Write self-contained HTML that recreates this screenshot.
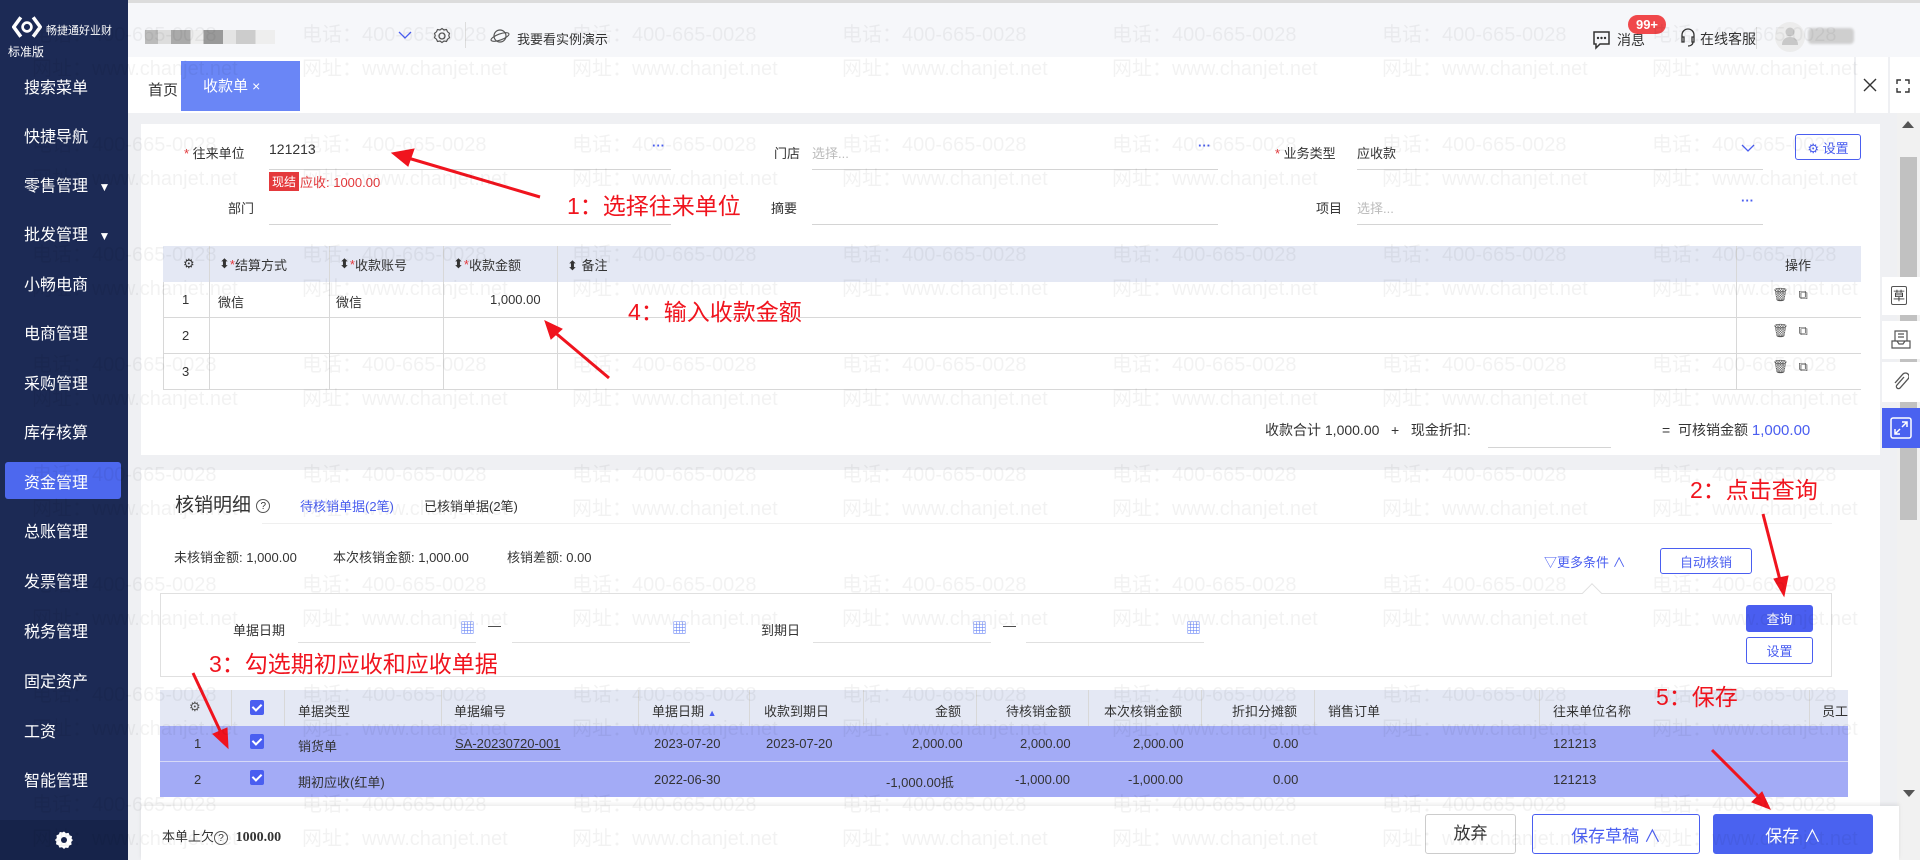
<!DOCTYPE html>
<html><head><meta charset="utf-8"><style>
*{box-sizing:border-box;margin:0;padding:0}
body{width:1920px;height:860px;overflow:hidden;position:relative;background:#eff0f3;font-family:"Liberation Sans","Noto Sans CJK SC",sans-serif;font-size:13px;color:#333}
.a{position:absolute;white-space:nowrap}
.sb{left:0;top:0;width:128px;height:860px;background:#1c2a55}
.mi{position:absolute;left:24px;color:#fff;font-size:16px;transform:translateY(-50%)}
.ul{position:absolute;height:1px;background:#d4d4d4}
.red{color:#e4393c}
.ann{position:absolute;color:#f0141e;font-size:23px;white-space:nowrap;transform:translateY(-50%)}
.th{position:absolute;top:0;height:100%;display:flex;align-items:center;font-size:13px;color:#333}
.vl{position:absolute;width:1px;background:#d8d8d8}
.hl{position:absolute;height:1px;background:#d8d8d8}
.cb{position:absolute;width:14px;height:15px;background:#4a5ef0;border-radius:2px}
.cb:after{content:"";position:absolute;left:4px;top:2px;width:4px;height:7px;border:solid #fff;border-width:0 2px 2px 0;transform:rotate(45deg)}
.wm{position:absolute;color:rgba(0,0,0,0.05);font-size:20px;font-family:"Liberation Sans Narrow","Liberation Sans","Noto Sans CJK SC",sans-serif;white-space:nowrap;pointer-events:none;z-index:50}
.btn{position:absolute;border:1px solid #4a5ef0;border-radius:3px;color:#4a5ef0;display:flex;align-items:center;justify-content:center;background:#fff}
</style></head><body>

<!-- header -->
<div class="a" style="left:0;top:0;width:1920px;height:57px;background:#f6f7fa;border-top:3px solid #dcdcdc"></div>
<div class="a" style="left:145px;top:30px;width:130px;height:14px;background:linear-gradient(90deg,#bbb 0 10%,#ddd 10% 20%,#aaa 20% 35%,#eee 35% 45%,#999 45% 60%,#e4e4e4 60% 70%,#ccc 70% 85%,#eee 85%)"></div>
<svg class="a" style="left:398px;top:30px" width="14" height="10"><path d="M1 2l6 6 6-6" stroke="#4a5ef0" fill="none" stroke-width="1.3"/></svg>
<svg class="a" style="left:433px;top:27px" width="18" height="18" viewBox="0 0 18 18"><circle cx="9" cy="9" r="3" stroke="#555" fill="none" stroke-width="1.3"/><path d="M9 1.5l2 1.5 2.5-.5 1 2.3 2 1.5-.7 2.2.7 2.2-2 1.5-1 2.3-2.5-.5-2 1.5-2-1.5-2.5.5-1-2.3-2-1.5.7-2.2-.7-2.2 2-1.5 1-2.3 2.5.5z" stroke="#555" fill="none" stroke-width="1.2"/></svg>
<div class="a" style="left:465px;top:22px;width:1px;height:26px;background:#ddd"></div>
<svg class="a" style="left:490px;top:27px" width="20" height="18"><ellipse cx="10" cy="9" rx="6" ry="6" stroke="#555" fill="none" stroke-width="1.2"/><ellipse cx="10" cy="10" rx="9.5" ry="3" stroke="#555" fill="none" stroke-width="1.1" transform="rotate(-20 10 10)"/></svg>
<div class="a" style="left:517px;top:29px;font-size:13px;color:#333">我要看实例演示</div>
<svg class="a" style="left:1592px;top:30px" width="20" height="20"><path d="M2 2h15v12H8l-4 4v-4H2z" stroke="#333" fill="none" stroke-width="1.5"/><circle cx="6" cy="8" r="1.2" fill="#333"/><circle cx="9.5" cy="8" r="1.2" fill="#333"/><circle cx="13" cy="8" r="1.2" fill="#333"/></svg>
<div class="a" style="left:1617px;top:30px;font-size:14px">消息</div>
<div class="a" style="left:1628px;top:15px;width:38px;height:19px;background:#f0484b;border-radius:10px;color:#fff;font-size:13px;font-weight:bold;text-align:center;line-height:19px">99+</div>
<svg class="a" style="left:1680px;top:27px" width="16" height="22"><path d="M2 12V8a6 6 0 0 1 12 0v4M2 10h2v5H2zM12 10h2v5h-2zM13 15c0 3-3 4-5 4" stroke="#333" fill="none" stroke-width="1.3"/></svg>
<div class="a" style="left:1700px;top:29px;font-size:14px">在线客服</div>
<div class="a" style="left:1756px;top:27px;width:1px;height:22px;background:#ddd"></div>
<div class="a" style="left:1775px;top:22px;width:30px;height:30px;border-radius:50%;background:#ececec"></div>
<svg class="a" style="left:1781px;top:26px" width="18" height="20"><circle cx="9" cy="6" r="4.5" fill="#c8c8c8"/><path d="M1 19c0-6 4-8 8-8s8 2 8 8z" fill="#c8c8c8"/></svg>
<div class="a" style="left:1808px;top:28px;width:46px;height:16px;background:#cfcfcf;border-radius:4px;filter:blur(1px)"></div>

<!-- sidebar -->
<div class="a sb"></div>
<svg class="a" style="left:12px;top:15px" width="30" height="24" viewBox="0 0 34 26"><path d="M10 2L2 13l8 11" stroke="#fff" stroke-width="4" fill="none"/><path d="M24 2l8 11-8 11" stroke="#fff" stroke-width="4" fill="none"/><circle cx="17" cy="13" r="5" stroke="#fff" stroke-width="3" fill="none"/></svg>
<div class="a" style="left:46px;top:22px;color:#fff;font-size:11px">畅捷通好业财</div>
<div class="a" style="left:8px;top:43px;color:#fff;font-size:12px">标准版</div>
<div class="mi" style="top:86px">搜索菜单</div>
<div class="mi" style="top:135px">快捷导航</div>
<div class="mi" style="top:184px">零售管理 <span style="font-size:12px;margin-left:6px">▼</span></div>
<div class="mi" style="top:233px">批发管理 <span style="font-size:12px;margin-left:6px">▼</span></div>
<div class="mi" style="top:283px">小畅电商</div>
<div class="mi" style="top:332px">电商管理</div>
<div class="mi" style="top:382px">采购管理</div>
<div class="mi" style="top:431px">库存核算</div>
<div class="a" style="left:5px;top:462px;width:116px;height:37px;background:#4d68ee;border-radius:3px"></div>
<div class="mi" style="top:481px">资金管理</div>
<div class="mi" style="top:530px">总账管理</div>
<div class="mi" style="top:580px">发票管理</div>
<div class="mi" style="top:630px">税务管理</div>
<div class="mi" style="top:680px">固定资产</div>
<div class="mi" style="top:730px">工资</div>
<div class="mi" style="top:779px">智能管理</div>
<div class="mi" style="top:828px">基础设置</div>
<div class="a" style="left:0;top:820px;width:128px;height:40px;background:#16234a"></div>
<svg class="a" style="left:55px;top:831px" width="18" height="18" viewBox="0 0 18 18"><path d="M9 0.5l2 1.8 2.6-.4 1 2.4 2.4 1-.4 2.6L18 9l-1.8 2 .4 2.6-2.4 1-1 2.4-2.6-.4L9 18l-2-1.8-2.6.4-1-2.4-2.4-1 .4-2.6L0 9l1.8-2-.4-2.6 2.4-1 1-2.4 2.6.4z" fill="#fff"/><circle cx="9" cy="9" r="3" fill="#16234a"/></svg>

<!-- tab row -->
<div class="a" style="left:128px;top:57px;width:1726px;height:56px;background:#fff"></div>
<div class="a" style="left:148px;top:79px;font-size:15px">首页</div>
<div class="a" style="left:181px;top:61px;width:119px;height:50px;background:#6a86f6;color:#fff;font-size:15px;line-height:50px;padding-left:22px">收款单 <span style="font-size:14px">×</span></div>
<div class="a" style="left:1856px;top:57px;width:32px;height:56px;background:#fff"></div>
<div class="a" style="left:1890px;top:57px;width:30px;height:56px;background:#fff"></div>
<svg class="a" style="left:1863px;top:78px" width="14" height="14"><path d="M1 1l12 12M13 1L1 13" stroke="#333" stroke-width="1.4"/></svg>
<svg class="a" style="left:1896px;top:79px" width="14" height="14"><path d="M1 5V1h4M9 1h4v4M13 9v4H9M5 13H1V9" stroke="#333" stroke-width="1.4" fill="none"/></svg>

<!-- scrollbar -->
<div class="a" style="left:1897px;top:113px;width:23px;height:747px;background:#f1f1f1"></div>
<div class="a" style="left:1900px;top:157px;width:17px;height:363px;background:#c1c1c1"></div>
<svg class="a" style="left:1902px;top:120px" width="12" height="8"><path d="M0 8L6 1 12 8z" fill="#555"/></svg>
<svg class="a" style="left:1903px;top:790px" width="12" height="8"><path d="M0 0h12L6 7z" fill="#555"/></svg>

<!-- card 1 -->
<div class="a" style="left:141px;top:124px;width:1739px;height:331px;background:#fff"></div>
<div class="a" style="left:184px;top:143px"><span class="red">*</span> 往来单位</div>
<div class="a" style="left:269px;top:141px;font-size:14px">121213</div>
<div class="ul" style="left:269px;top:169px;width:402px"></div>
<div class="a" style="left:652px;top:138px;color:#4a5ef0;font-weight:bold">···</div>
<div class="a" style="left:269px;top:172px;background:#e4393c;color:#fff;font-size:12px;padding:1px 3px">现结</div>
<div class="a red" style="left:300px;top:172px;font-size:13px">应收: 1000.00</div>
<div class="a" style="left:774px;top:143px">门店</div>
<div class="a" style="left:812px;top:143px;color:#bbb">选择...</div>
<div class="ul" style="left:812px;top:169px;width:406px"></div>
<div class="a" style="left:1198px;top:138px;color:#4a5ef0;font-weight:bold">···</div>
<div class="a" style="left:1275px;top:143px"><span class="red">*</span> 业务类型</div>
<div class="a" style="left:1357px;top:143px">应收款</div>
<svg class="a" style="left:1741px;top:144px" width="14" height="9"><path d="M1 1l6 6 6-6" stroke="#4a5ef0" fill="none" stroke-width="1.3"/></svg>
<div class="ul" style="left:1357px;top:169px;width:406px"></div>
<div class="btn" style="left:1795px;top:134px;width:66px;height:26px;font-size:13px">⚙ 设置</div>
<div class="a" style="left:228px;top:198px">部门</div>
<div class="ul" style="left:269px;top:224px;width:402px"></div>
<div class="a" style="left:771px;top:198px">摘要</div>
<div class="ul" style="left:812px;top:224px;width:406px"></div>
<div class="a" style="left:1316px;top:198px">项目</div>
<div class="a" style="left:1357px;top:198px;color:#bbb">选择...</div>
<div class="a" style="left:1741px;top:193px;color:#4a5ef0;font-weight:bold">···</div>
<div class="ul" style="left:1357px;top:224px;width:406px"></div>

<!-- table1 -->
<div class="a" style="left:163px;top:246px;width:1698px;height:36px;background:#e4e8f4">
 <div class="th" style="left:20px">⚙</div>
 <div class="th" style="left:56px">⬍<span class="red">*</span>结算方式</div>
 <div class="th" style="left:176px">⬍<span class="red">*</span>收款账号</div>
 <div class="th" style="left:290px">⬍ <span class="red">*</span>收款金额</div>
 <div class="th" style="left:404px">⬍ 备注</div>
 <div class="th" style="left:1622px">操作</div>
</div>
<div class="vl" style="left:209px;top:246px;height:143px"></div>
<div class="vl" style="left:329px;top:246px;height:143px"></div>
<div class="vl" style="left:443px;top:246px;height:143px"></div>
<div class="vl" style="left:557px;top:246px;height:143px"></div>
<div class="vl" style="left:1736px;top:246px;height:143px"></div>
<div class="vl" style="left:163px;top:282px;height:107px"></div>
<div class="hl" style="left:163px;top:317px;width:1698px"></div>
<div class="hl" style="left:163px;top:353px;width:1698px"></div>
<div class="hl" style="left:163px;top:389px;width:1698px"></div>
<div class="a" style="left:182px;top:292px">1</div>
<div class="a" style="left:182px;top:328px">2</div>
<div class="a" style="left:182px;top:364px">3</div>
<div class="a" style="left:218px;top:292px">微信</div>
<div class="a" style="left:336px;top:292px">微信</div>
<div class="a" style="left:490px;top:292px">1,000.00</div>
<div class="a" style="left:1772px;top:287px;font-size:13px;color:#555;letter-spacing:10px">🗑⧉</div>
<div class="a" style="left:1772px;top:323px;font-size:13px;color:#555;letter-spacing:10px">🗑⧉</div>
<div class="a" style="left:1772px;top:359px;font-size:13px;color:#555;letter-spacing:10px">🗑⧉</div>
<div class="a" style="left:1265px;top:420px;font-size:14px">收款合计 1,000.00 &nbsp;&nbsp;+&nbsp;&nbsp; 现金折扣:</div>
<div class="ul" style="left:1488px;top:447px;width:123px"></div>
<div class="a" style="left:1662px;top:420px;font-size:14px">= &nbsp;可核销金额 <span style="color:#4a5ef0;font-size:15px">1,000.00</span></div>

<!-- right floating -->
<div class="a" style="left:1882px;top:277px;width:38px;height:38px;background:#fff"></div>
<div class="a" style="left:1882px;top:321px;width:38px;height:38px;background:#fff"></div>
<div class="a" style="left:1882px;top:362px;width:38px;height:40px;background:#fff"></div>
<div class="a" style="left:1882px;top:408px;width:38px;height:40px;background:#4a62f0"></div>
<div class="a" style="left:1891px;top:286px;font-size:12px;border:1.3px solid #555;border-radius:2px;padding:0 1px">草</div>
<svg class="a" style="left:1891px;top:330px" width="20" height="20"><path d="M4 1h12v10H4zM7 4h6M7 7h6M1 11l5 0 2 3h4l2-3h5v7H1z" stroke="#555" fill="none" stroke-width="1.2"/></svg>
<svg class="a" style="left:1893px;top:372px" width="16" height="20"><path d="M11 5L4 13a2 2 0 0 0 3 3l8-9a3.5 3.5 0 0 0-5-5L2 11" stroke="#555" fill="none" stroke-width="1.3"/></svg>
<svg class="a" style="left:1890px;top:417px" width="22" height="22"><rect x="1" y="1" width="20" height="20" rx="2" stroke="#fff" fill="none" stroke-width="1.5"/><path d="M12 5h5v5M17 5l-5 5M10 17H5v-5M5 17l5-5" stroke="#fff" fill="none" stroke-width="1.5"/></svg>

<!-- card 2 -->
<div class="a" style="left:141px;top:470px;width:1739px;height:390px;background:#fff"></div>
<div class="a" style="left:175px;top:490px;font-size:19px">核销明细 <span style="font-size:13px;border:1px solid #555;border-radius:50%;display:inline-block;width:14px;height:14px;line-height:13px;text-align:center;font-size:10px;vertical-align:middle">?</span></div>
<div class="a" style="left:300px;top:496px;color:#4a5ef0">待核销单据(2笔)</div>
<div class="a" style="left:424px;top:496px">已核销单据(2笔)</div>
<div class="hl" style="left:262px;top:523px;width:1570px;background:#efefef"></div>
<div class="a" style="left:174px;top:547px">未核销金额: 1,000.00</div>
<div class="a" style="left:333px;top:547px">本次核销金额: 1,000.00</div>
<div class="a" style="left:507px;top:547px">核销差额: 0.00</div>
<div class="a" style="left:1544px;top:552px;color:#4a5ef0">▽更多条件 ∧</div>
<div class="btn" style="left:1660px;top:548px;width:92px;height:26px">自动核销</div>
<div class="a" style="left:160px;top:593px;width:1672px;height:84px;border:1px solid #e0e0e0"></div>
<div class="a" style="left:1585px;top:586px;width:14px;height:14px;background:#fff;border-left:1px solid #e0e0e0;border-top:1px solid #e0e0e0;transform:rotate(45deg)"></div>
<div class="a" style="left:233px;top:620px">单据日期</div>
<div class="ul" style="left:298px;top:642px;width:178px;background:#e0e0e0"></div>
<div class="a" style="left:460px;top:617px;color:#6a86f6;font-size:15px">▦</div>
<div class="a" style="left:488px;top:618px">—</div>
<div class="ul" style="left:512px;top:642px;width:178px;background:#e0e0e0"></div>
<div class="a" style="left:672px;top:617px;color:#6a86f6;font-size:15px">▦</div>
<div class="a" style="left:761px;top:620px">到期日</div>
<div class="ul" style="left:813px;top:642px;width:178px;background:#e0e0e0"></div>
<div class="a" style="left:972px;top:617px;color:#6a86f6;font-size:15px">▦</div>
<div class="a" style="left:1003px;top:618px">—</div>
<div class="ul" style="left:1026px;top:642px;width:178px;background:#e0e0e0"></div>
<div class="a" style="left:1186px;top:617px;color:#6a86f6;font-size:15px">▦</div>
<div class="btn" style="left:1746px;top:605px;width:67px;height:27px;background:#4a5ef0;color:#fff">查询</div>
<div class="btn" style="left:1746px;top:637px;width:67px;height:27px">设置</div>

<!-- table2 -->
<div class="a" style="left:160px;top:690px;width:1688px;height:36px;background:#e4e8f4"></div>
<div class="a" style="left:160px;top:726px;width:1688px;height:71px;background:#a3abf6"></div>
<div class="hl" style="left:160px;top:761px;width:1688px;background:#d6d9f7"></div>
<div class="vl" style="left:231px;top:690px;height:36px"></div>
<div class="vl" style="left:284px;top:690px;height:36px"></div>
<div class="vl" style="left:441px;top:690px;height:36px"></div>
<div class="vl" style="left:638px;top:690px;height:36px"></div>
<div class="vl" style="left:749px;top:690px;height:36px"></div>
<div class="vl" style="left:863px;top:690px;height:36px"></div>
<div class="vl" style="left:976px;top:690px;height:36px"></div>
<div class="vl" style="left:1088px;top:690px;height:36px"></div>
<div class="vl" style="left:1201px;top:690px;height:36px"></div>
<div class="vl" style="left:1314px;top:690px;height:36px"></div>
<div class="vl" style="left:1539px;top:690px;height:36px"></div>
<div class="vl" style="left:1809px;top:690px;height:36px"></div>
<div class="a" style="left:189px;top:699px;color:#555">⚙</div>
<div class="cb" style="left:250px;top:700px"></div>
<div class="cb" style="left:250px;top:734px"></div>
<div class="cb" style="left:250px;top:770px"></div>
<div class="a" style="left:298px;top:701px">单据类型</div>
<div class="a" style="left:454px;top:701px">单据编号</div>
<div class="a" style="left:652px;top:701px">单据日期 <span style="font-size:9px;color:#4a5ef0">▲</span></div>
<div class="a" style="left:764px;top:701px">收款到期日</div>
<div class="a" style="left:935px;top:701px">金额</div>
<div class="a" style="left:1006px;top:701px">待核销金额</div>
<div class="a" style="left:1104px;top:701px">本次核销金额</div>
<div class="a" style="left:1232px;top:701px">折扣分摊额</div>
<div class="a" style="left:1328px;top:701px">销售订单</div>
<div class="a" style="left:1553px;top:701px">往来单位名称</div>
<div class="a" style="left:1822px;top:701px">员工</div>
<div class="a" style="left:194px;top:736px">1</div>
<div class="a" style="left:194px;top:772px">2</div>
<div class="a" style="left:298px;top:736px">销货单</div>
<div class="a" style="left:455px;top:736px;text-decoration:underline">SA-20230720-001</div>
<div class="a" style="left:654px;top:736px">2023-07-20</div>
<div class="a" style="left:766px;top:736px">2023-07-20</div>
<div class="a" style="left:912px;top:736px">2,000.00</div>
<div class="a" style="left:1020px;top:736px">2,000.00</div>
<div class="a" style="left:1133px;top:736px">2,000.00</div>
<div class="a" style="left:1273px;top:736px">0.00</div>
<div class="a" style="left:1553px;top:736px">121213</div>
<div class="a" style="left:298px;top:772px">期初应收(红单)</div>
<div class="a" style="left:654px;top:772px">2022-06-30</div>
<div class="a" style="left:886px;top:772px">-1,000.00抵</div>
<div class="a" style="left:1015px;top:772px">-1,000.00</div>
<div class="a" style="left:1128px;top:772px">-1,000.00</div>
<div class="a" style="left:1273px;top:772px">0.00</div>
<div class="a" style="left:1553px;top:772px">121213</div>

<!-- bottom bar -->
<div class="a" style="left:141px;top:806px;width:1758px;height:54px;background:#fff;box-shadow:0 -2px 4px rgba(0,0,0,0.08)"></div>
<div class="a" style="left:162px;top:826px">本单上欠<span style="border:1px solid #555;border-radius:50%;display:inline-block;width:14px;height:14px;line-height:13px;text-align:center;font-size:10px">?</span> <b style="font-family:'Liberation Serif',serif;font-size:14px;margin-left:4px">1000.00</b></div>
<div class="a" style="left:1425px;top:814px;width:91px;height:40px;border:1px solid #ccc;border-radius:3px;text-align:center;line-height:38px;font-size:17px">放弃</div>
<div class="btn" style="left:1532px;top:814px;width:168px;height:40px;font-size:17px">保存草稿 ∧</div>
<div class="btn" style="left:1713px;top:814px;width:160px;height:40px;font-size:17px;background:#4a62f0;color:#fff;border-color:#4a62f0">保存 ∧</div>

<!-- annotations -->
<div class="ann" style="left:567px;top:204px">1：选择往来单位</div>
<div class="ann" style="left:628px;top:310px">4：输入收款金额</div>
<div class="ann" style="left:1690px;top:488px">2：点击查询</div>
<div class="ann" style="left:209px;top:662px">3：勾选期初应收和应收单据</div>
<div class="ann" style="left:1656px;top:695px">5：保存</div>
<svg class="a" style="left:0;top:0;z-index:40" width="1920" height="860">
<g fill="#f0141e" stroke="#f0141e">
<path d="M540 197L408 158" stroke-width="3"/><path d="M392 153l22-4-6 17z" />
<path d="M609 378L552 330" stroke-width="3"/><path d="M545 321l17 8-11 10z"/>
<path d="M1763 514L1781 584" stroke-width="3"/><path d="M1784 596l-10-17 14-3z"/>
<path d="M193 673L223 737" stroke-width="3"/><path d="M228 748l-15-14 14-6z"/>
<path d="M1712 750L1762 800" stroke-width="3"/><path d="M1770 809l-18-7 10-10z"/>
</g></svg>

<!-- watermark -->
<div id="wm"></div>
<script>
var h='';for(var r=0;r<8;r++){for(var c=-1;c<7;c++){var x=32+270*c,y=18+110*r;h+='<div class="wm" style="left:'+x+'px;top:'+y+'px">电话：400-665-0028</div><div class="wm" style="left:'+x+'px;top:'+(y+34)+'px">网址：www.chanjet.net</div>';}}document.getElementById('wm').innerHTML=h;
</script>
</body></html>
